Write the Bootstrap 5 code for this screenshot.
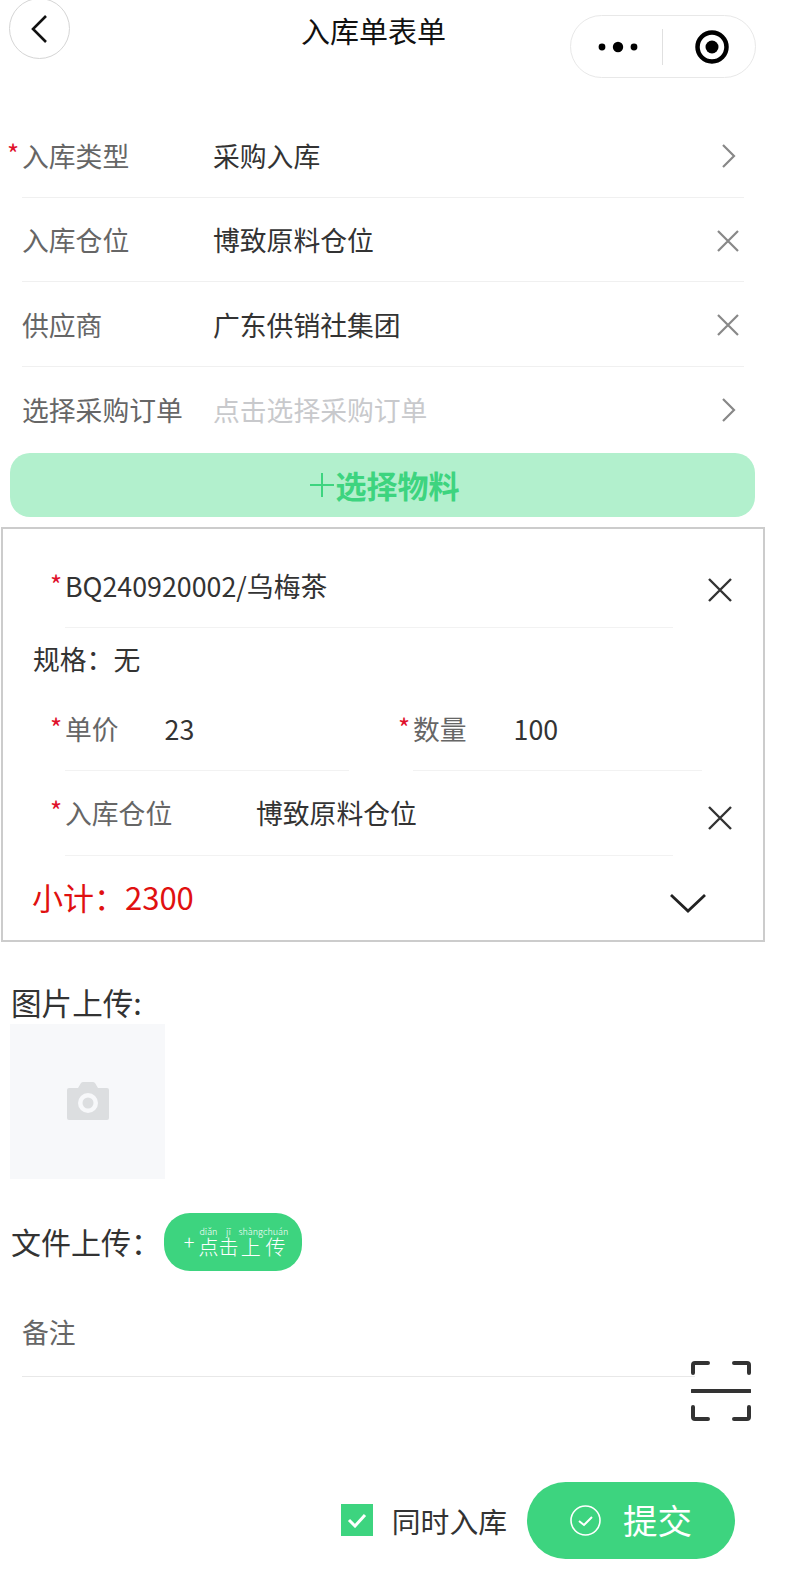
<!DOCTYPE html>
<html lang="zh">
<head>
  <meta charset="UTF-8" />
  <meta name="viewport" content="width=device-width, initial-scale=1.0"/>
  <title>入库单表单</title>
  <link href="https://cdn.jsdelivr.net/npm/bootstrap@5.3.0/dist/css/bootstrap.min.css" rel="stylesheet"/>
  <style>
    body { font-family: "Noto Sans CJK SC", "Noto Sans", sans-serif; color: #333; background: #fff; font-size: 26.8px; overflow-x: hidden; }
    .top-bar { height: 113px; }
    .back-btn { width: 61px; height: 61px; margin-top: -2px; margin-left: 9px; border: 1px solid #d5d5d5; border-radius: 50%; }
    .page-title { width: 145px; margin-left: 231px; margin-top: 9px; font-size: 29px; line-height: 42px; color: #111; white-space: nowrap; }
    .capsule { width: 186px; height: 63px; margin-top: 15px; margin-right: 33px; border: 1px solid #e8e8e8; border-radius: 32px; }
    .capsule-line { width: 1px; height: 36px; background: #e0e0e0; }
    .capsule-dots { margin-left: 27px; }
    .capsule-eye { margin-right: 25px; }
    .form-line { height: 84.7px; margin-left: 22px; margin-right: 45px; padding-top: 2px; border-bottom: 1px solid #f0f0f0; }
    .form-line.no-line { border-bottom: 0; }
    .req-mark { width: 15px; margin-left: -15px; color: #e0102a; font-size: 26px; line-height: 1; align-self: center; margin-top: -6px; }
    .field-name { width: 191px; color: #666; }
    .field-short { color: #666; margin-right: 46px; }
    .placeholder-text { color: #c8c9cc; }
    .arrow-icon { margin-right: 6px; }
    .clear-icon { margin-right: 3px; }
    .add-material { height: 64px; margin: 1px 34px 10px 10px; padding-left: 3px; background: #b2f0cd; border-radius: 20px; color: #3dd47f; font-size: 31px; font-weight: 700; }
    .add-material svg { margin-right: 1px; }
    .material-box { width: 764px; height: 415px; margin-left: 1px; border: 2px solid #ccc; padding-top: 15px; }
    .item-line { height: 84.5px; margin-left: 62px; border-bottom: 1px solid #f2f2f2; }
    .item-wide { width: 608px; }
    .item-first { padding-top: 2px; }
    .item-split { height: 81.5px; }
    .item-last { height: 85.5px; }
    .item-price { width: 284px; }
    .item-qty { width: 289px; margin-left: 64px; }
    .item-qty .field-short { margin-right: 47px; }
    .spec-line { margin-left: 30px; height: 61px; }
    .close-icon { margin-left: 34px; margin-top: 8px; }
    .subtotal { margin-left: 29px; height: 82px; padding-right: 56px; color: #e01010; font-size: 31px; }
    .subtotal svg { margin-top: 12px; }
    .upload-title { margin: 38px 0 0 11px; font-size: 30.6px; line-height: 44px; }
    .photo-box { width: 155px; height: 155px; margin-left: 10px; background: #f7f8fa; }
    .file-row { margin: 34px 0 0 11px; font-size: 30px; }
    .file-btn { width: 138px; height: 58px; margin-left: 3px; padding-left: 6px; background: #3dd47f; border-radius: 26px; color: #fff; font-size: 20px; font-weight: 300; line-height: 1; }
    .file-btn rt { font-size: 9px; }
    .file-plus { margin-right: 4px; }
    .memo-line { height: 85px; margin: 21px 0 0 22px; padding-bottom: 3px; width: 673px; border-bottom: 1px solid #e8e8e8; color: #666; }
    .scan-icon { margin: -16px 38px 0 auto; display: block; }
    .bottom-bar { margin: 61px 54px 0 0; }
    .check-box { width: 32px; height: 32px; background: #3dd47f; }
    .check-text { margin: 0 20px 0 19px; font-size: 28.8px; }
    .submit-btn { width: 208px; height: 77px; background: #3dd47f; border: 0; border-radius: 39px; color: #fff; font-size: 34.5px; }
    .submit-btn:hover { background: #3dd47f; color: #fff; }
    .submit-btn svg { margin-right: 22px; }
  </style>
</head>
<body>
  <div class="top-bar d-flex align-items-start">
    <div class="back-btn d-flex align-items-center justify-content-center">
      <svg width="20" height="32" viewBox="0 0 20 32" fill="none" stroke="#111" stroke-width="2.6"><path d="M16 3 3 16l13 13"/></svg>
    </div>
    <div class="page-title text-center">入库单表单</div>
    <div class="capsule ms-auto d-flex align-items-center">
      <svg class="capsule-dots" width="40" height="14" viewBox="0 0 40 14" fill="#000"><circle cx="4" cy="7" r="3.4"/><circle cx="20" cy="7" r="5.2"/><circle cx="36" cy="7" r="3.4"/></svg>
      <div class="capsule-line ms-4"></div>
      <svg class="capsule-eye ms-auto" width="36" height="36" viewBox="0 0 36 36" fill="#000"><circle cx="18" cy="18" r="14.5" fill="none" stroke="#000" stroke-width="4.5"/><circle cx="18" cy="18" r="6.5"/></svg>
    </div>
  </div>

  <div class="form-line d-flex align-items-center">
    <span class="req-mark">*</span>
    <span class="field-name">入库类型</span>
    <span class="flex-grow-1">采购入库</span>
    <svg class="arrow-icon" width="18" height="28" viewBox="0 0 18 28" fill="none" stroke="#888" stroke-width="2.2"><path d="M3 3l11 11L3 25"/></svg>
  </div>
  <div class="form-line d-flex align-items-center">
    <span class="field-name">入库仓位</span>
    <span class="flex-grow-1">博致原料仓位</span>
    <svg class="clear-icon" width="26" height="26" viewBox="0 0 26 26" fill="none" stroke="#888" stroke-width="2.2"><path d="M3 3l20 20M23 3 3 23"/></svg>
  </div>
  <div class="form-line d-flex align-items-center">
    <span class="field-name">供应商</span>
    <span class="flex-grow-1">广东供销社集团</span>
    <svg class="clear-icon" width="26" height="26" viewBox="0 0 26 26" fill="none" stroke="#888" stroke-width="2.2"><path d="M3 3l20 20M23 3 3 23"/></svg>
  </div>
  <div class="form-line no-line d-flex align-items-center">
    <span class="field-name">选择采购订单</span>
    <span class="flex-grow-1 placeholder-text">点击选择采购订单</span>
    <svg class="arrow-icon" width="18" height="28" viewBox="0 0 18 28" fill="none" stroke="#888" stroke-width="2.2"><path d="M3 3l11 11L3 25"/></svg>
  </div>

  <div class="add-material d-flex align-items-center justify-content-center">
    <svg width="26" height="26" viewBox="0 0 26 26" fill="none" stroke="#3dd47f" stroke-width="2"><path d="M13 1v24M1 13h24"/></svg>
    <span>选择物料</span>
  </div>

  <div class="material-box">
    <div class="d-flex align-items-center">
      <div class="item-line item-first item-wide d-flex align-items-center">
        <span class="req-mark">*</span><span>BQ240920002/乌梅茶</span>
      </div>
      <svg class="close-icon" width="26" height="26" viewBox="0 0 26 26" fill="none" stroke="#333" stroke-width="2.4"><path d="M2 2l22 22M24 2 2 24"/></svg>
    </div>
    <div class="spec-line d-flex align-items-center">规格：无</div>
    <div class="d-flex">
      <div class="item-line item-split item-price d-flex align-items-center">
        <span class="req-mark">*</span><span class="field-short">单价</span><span>23</span>
      </div>
      <div class="item-line item-split item-qty d-flex align-items-center">
        <span class="req-mark">*</span><span class="field-short">数量</span><span>100</span>
      </div>
    </div>
    <div class="d-flex align-items-center">
      <div class="item-line item-last item-wide d-flex align-items-center">
        <span class="req-mark">*</span><span class="field-name">入库仓位</span><span>博致原料仓位</span>
      </div>
      <svg class="close-icon" width="26" height="26" viewBox="0 0 26 26" fill="none" stroke="#333" stroke-width="2.4"><path d="M2 2l22 22M24 2 2 24"/></svg>
    </div>
    <div class="subtotal d-flex align-items-center justify-content-between">
      <span>小计：2300</span>
      <svg width="38" height="22" viewBox="0 0 38 22" fill="none" stroke="#222" stroke-width="2.8"><path d="M2 3l17 16L36 3"/></svg>
    </div>
  </div>

  <div class="upload-title">图片上传:</div>
  <div class="photo-box d-flex align-items-center justify-content-center">
    <svg width="42" height="38" viewBox="0 0 42 38"><path fill="#dcdee0" d="M2 6h9l3-5q1-1 2-1h10q1 0 2 1l3 5h9q2 0 2 2v28q0 2-2 2H2q-2 0-2-2V8q0-2 2-2z"/><circle cx="21" cy="21" r="10" fill="#f7f8fa"/><circle cx="21" cy="21" r="5.5" fill="#dcdee0"/></svg>
  </div>
  <div class="file-row d-flex align-items-center">
    <span>文件上传：</span>
    <div class="file-btn d-flex align-items-center justify-content-center">
      <span class="file-plus">+</span>
      <ruby>点<rt>diǎn</rt></ruby><ruby>击<rt>jī</rt></ruby><ruby>上<rt>shàng</rt></ruby><ruby>传<rt>chuán</rt></ruby>
    </div>
  </div>

  <div class="memo-line d-flex align-items-center">备注</div>
  <svg class="scan-icon" width="60" height="60" viewBox="0 0 60 60" fill="none" stroke="#333" stroke-width="4" stroke-linecap="round" stroke-linejoin="round"><path d="M2 12V4q0-2 2-2h13M43 2h13q2 0 2 2v8M1 30h58M2 46v10q0 2 2 2h13M43 58h13q2 0 2-2V46"/></svg>

  <div class="bottom-bar d-flex align-items-center justify-content-end">
    <div class="check-box d-flex align-items-center justify-content-center">
      <svg width="20" height="16" viewBox="0 0 20 16" fill="none" stroke="#fff" stroke-width="3"><path d="M2 8l6 6L18 3"/></svg>
    </div>
    <span class="check-text">同时入库</span>
    <button class="btn submit-btn d-flex align-items-center justify-content-center" type="button">
      <svg width="31" height="31" viewBox="0 0 31 31" fill="none" stroke="#fff" stroke-width="1.6"><circle cx="15.5" cy="15.5" r="14.5"/><path stroke-width="2" d="M9 16l5 4 8-8"/></svg>
      <span>提交</span>
    </button>
  </div>
</body>
</html>
